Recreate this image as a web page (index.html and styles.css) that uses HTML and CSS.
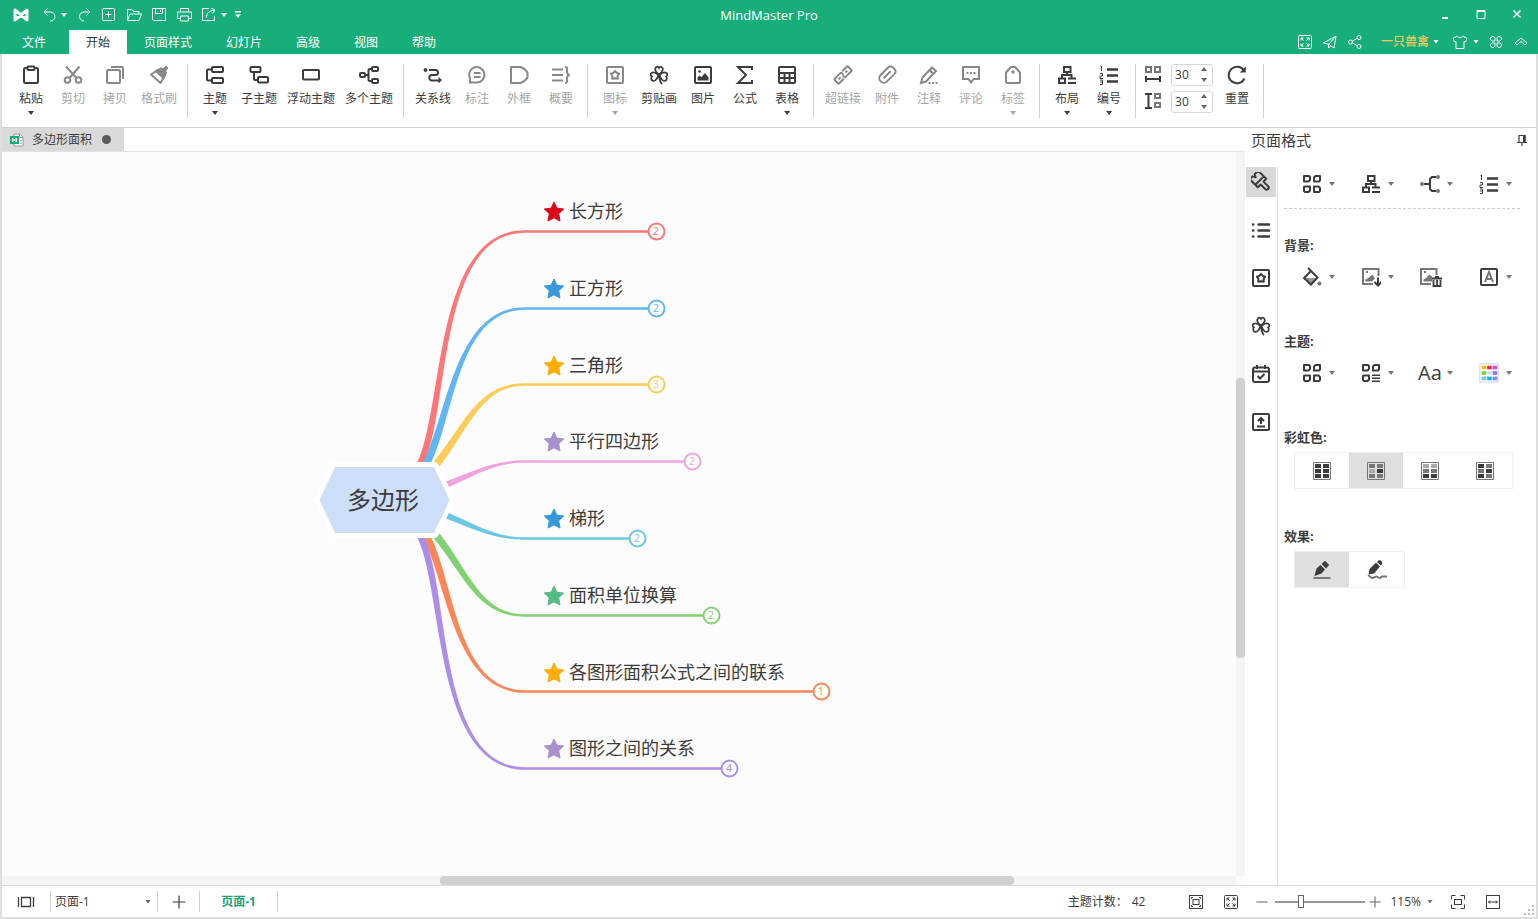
FILE: index.html
```html
<!DOCTYPE html>
<html lang="zh-CN">
<head>
<meta charset="utf-8">
<title>MindMaster Pro</title>
<link rel="stylesheet" href="styles.css">
</head>
<body>
<svg class="sprite" aria-hidden="true">
  <symbol id="logo" viewBox="0 0 16 14"><path d="M2 12V2l12 10V2L2 12" fill="none" stroke="currentColor" stroke-width="3" stroke-linejoin="round" stroke-linecap="round"/></symbol>
  <symbol id="undo" viewBox="0 0 17 17"><path d="M6.500 1.500L3 5l3.500 3.500M3 5h6.500a4.500 4.500 0 0 1 0 9H9"/></symbol>
  <symbol id="redo" viewBox="0 0 17 17"><path d="M10.500 1.500L14 5l-3.500 3.500M14 5H8a4.500 4.500 0 0 0 0 9"/></symbol>
  <symbol id="new" viewBox="0 0 17 17"><rect x="1.500" y="1.500" width="12" height="12" rx="1"/><path d="M7.500 4.500v6M4.500 7.500h6"/></symbol>
  <symbol id="open" viewBox="0 0 17 17"><path d="M1.500 13.500V2.500h4.500l1.500 2h5.500v2.500M1.500 13.500l2.500-6.500h11.500l-2.500 6.500z"/></symbol>
  <symbol id="save" viewBox="0 0 17 17"><path d="M1.500 1.500h13v12h-12l-1-1zM4.500 1.500v5h7v-5M9.500 3v2"/></symbol>
  <symbol id="print" viewBox="0 0 17 17"><path d="M4.500 5V1.500h8V5M4.500 11.500h-3V5h14v6.500h-3M4.500 9h8v5h-8z"/></symbol>
  <symbol id="export" viewBox="0 0 17 17"><path d="M8 1.500H1.500v12h12V9M5.500 10.500c0-4 2-6.500 8-7.500M10.500 1.500L14 3l-2.500 3.500"/></symbol>
  <symbol id="more" viewBox="0 0 8 8"><path d="M1 .8h6" stroke-width="1.500"/><path d="M1 3.500h6L4 7z" fill="currentColor" stroke="none"/></symbol>
  <symbol id="full" viewBox="0 0 16 16"><rect x="1.500" y="1.500" width="13" height="13" rx="1"/><path d="M4 6.500V4h2.500M4 4l2.500 2.500M9.500 4H12v2.500M12 4L9.500 6.500M4 9.500V12h2.500M4 12l2.500-2.500M12 9.500V12H9.500M12 12L9.500 9.500"/></symbol>
  <symbol id="plane" viewBox="0 0 16 16"><path d="M1.500 9L14 2l-2 12-5-3.500zM6.500 10.500L14 2M6.500 10.500V14l2-2"/></symbol>
  <symbol id="share" viewBox="0 0 16 16"><circle cx="3.500" cy="8" r="2"/><circle cx="12" cy="3.500" r="2"/><circle cx="12" cy="12.500" r="2"/><path d="M5.500 7L10 4.500M5.500 9l4.500 2.500"/></symbol>
  <symbol id="shirt" viewBox="0 0 16 16"><path d="M5 2L1 4.500l1.500 3.500 1.500-.5v7h8v-7l1.500.5L15 4.500 11 2c-1 2-5 2-6 0z"/></symbol>
  <symbol id="apps" viewBox="0 0 16 16"><path d="M7 7H4.200A2.300 2.300 0 1 1 7 4.200zM9 7h2.800A2.300 2.300 0 1 0 9 4.200zM7 9H4.200A2.300 2.300 0 1 0 7 11.800zM9 9h2.800A2.300 2.300 0 1 1 9 11.800z"/></symbol>
  <symbol id="chev" viewBox="0 0 16 16"><path d="M2 9l6-5 6 5-2 2-4-3.500L4 11z"/></symbol>
  <symbol id="paste" viewBox="0 0 20 20"><rect x="3" y="3" width="14" height="15" rx="1.500"/><rect x="6.500" y="1.500" width="7" height="3.500" rx="1" fill="#fff"/></symbol>
  <symbol id="cut" viewBox="0 0 20 20"><circle cx="4.500" cy="15" r="2.800"/><circle cx="15.500" cy="15" r="2.800"/><path d="M6.500 13L16.500 1.500M13.500 13L3 1.500"/></symbol>
  <symbol id="copy" viewBox="0 0 20 20"><rect x="2" y="5" width="13" height="13" rx="1"/><path d="M6 2h11a1 1 0 0 1 1 1v11"/></symbol>
  <symbol id="brush" viewBox="0 0 20 20"><path d="M2 9.500l7-4.500 6.500 6L11.500 18z" stroke-linejoin="round"/><path d="M7 6l3-1.500L16 10l-1.500 3z" fill="currentColor"/><path d="M9.500 5.500l2-3 2.500 1.500L17 .8 19 3l-2.500 3 1.200 2-2.200 3z" fill="currentColor" stroke-width="1"/></symbol>
  <symbol id="topic" viewBox="0 0 20 20"><rect x="7" y="2" width="11" height="5" rx="1"/><rect x="7" y="13" width="11" height="5" rx="1"/><path d="M7 4.500H3a1 1 0 0 0-1 1v9a1 1 0 0 0 1 1h4"/></symbol>
  <symbol id="subtopic" viewBox="0 0 20 20"><rect x="1.500" y="2" width="10" height="5" rx="1"/><rect x="9" y="12" width="10" height="5.500" rx="1"/><path d="M5 7v7a1 1 0 0 0 1 1h3"/></symbol>
  <symbol id="float" viewBox="0 0 20 20"><rect x="2" y="5" width="16" height="9.500" rx="1"/></symbol>
  <symbol id="multi" viewBox="0 0 20 20"><rect x="1" y="8" width="5" height="4" rx="1"/><rect x="13" y="2" width="6" height="4" rx="1"/><rect x="13" y="14" width="6" height="4" rx="1"/><path d="M6 10h3.500M13 4h-2.500a1 1 0 0 0-1 1v10a1 1 0 0 0 1 1H13"/></symbol>
  <symbol id="relation" viewBox="0 0 20 20"><circle cx="2.500" cy="5" r="1.500" fill="currentColor" stroke-width="1"/><path d="M6 5h6.500a2.500 2.500 0 0 1 0 5H9a2.500 2.500 0 0 0 0 5.500h7"/><path d="M15.500 12v6.500L19 15z" fill="currentColor" stroke-width="0"/></symbol>
  <symbol id="callout" viewBox="0 0 20 20"><path d="M3 17.500V13.500A7.700 7.700 0 1 1 10 17.500zM7 8h6.500M7 12h6.500"/></symbol>
  <symbol id="boundary" viewBox="0 0 20 20"><path d="M2 2h9.500c3 1 5.500 3 7 5.500v5c-1.500 2.500-4 4.500-7 5.500H2z" stroke-linejoin="round"/></symbol>
  <symbol id="summary" viewBox="0 0 20 20"><path d="M1 4.500h11M1 10h11M1 15.500h11M14 2c3 0 2 2 2 4.500 0 2 .5 3 2.500 3.500-2 .5-2.500 1.500-2.500 3.500 0 2.500 1 4.500-2 4.500"/></symbol>
  <symbol id="mark" viewBox="0 0 20 20"><rect x="2" y="2" width="16" height="16" rx="1"/><path d="M10 5.800l1.500 1.900 2.600.9-1.400 2.200v2.900L10 13.200l-2.700.5v-2.900L5.900 8.600l2.600-.9z" stroke-linejoin="round"/></symbol>
  <symbol id="clover" viewBox="0 0 20 20"><path d="M10 9.500C7.500 7.500 6 5.500 6.200 3.800 6.500 1.500 9 1 10 2.800c1-1.800 3.500-1.300 3.800 1C14 5.500 12.500 7.500 10 9.500zM9.500 10C7 7.700 4.500 6.700 2.800 7.800c-1.800 1.300-1.300 3 .1 3.700-1.300 1.500-.8 4.200 1.600 4.400C6.800 16 8.300 13.500 9.500 10zM10.500 10c2.500-2.300 5-3.300 6.700-2.200 1.800 1.300 1.300 3-.1 3.700 1.300 1.500.8 4.200-1.600 4.400-2.300.1-3.800-2.400-5-5.900zM10 9.500c.2 4.500.8 7.500 3 9.500" stroke-width="1.800"/></symbol>
  <symbol id="picture" viewBox="0 0 20 20"><rect x="2" y="2" width="16" height="16" rx="1"/><path d="M4.500 15.500v-3l2-2 2 1.500 3.500-4 3.500 4.500v3z" fill="currentColor" stroke="none"/><circle cx="6.500" cy="6.500" r="1.300" fill="currentColor" stroke="none"/></symbol>
  <symbol id="sigma" viewBox="0 0 20 20"><path d="M17 5V2H3l8 8-8 8h14v-3"/></symbol>
  <symbol id="table" viewBox="0 0 20 20"><rect x="2" y="2" width="16" height="16" rx="1"/><path d="M2 8h16M2 13h16M7.500 8v10M12.500 8v10"/></symbol>
  <symbol id="link" viewBox="0 0 20 20"><g transform="rotate(-45 10 10)"><path d="M8 13.200H1.500a1 1 0 0 1-1-1V7.800a1 1 0 0 1 1-1h8a1 1 0 0 1 1 1V10M12 6.800h6.500a1 1 0 0 1 1 1v4.400a1 1 0 0 1-1 1h-8a1 1 0 0 1-1-1V10M4 10h2.500M13.500 10H16"/></g></symbol>
  <symbol id="clip" viewBox="0 0 20 20"><g transform="rotate(45 10 10)"><path d="M14.500 6v8.500a4.500 4.500 0 0 1-9 0V4a3.200 3.200 0 0 1 3.200-3.500h2.600a3.200 3.200 0 0 1 3.200 3.500M10 5.500v8.500" stroke-linecap="round"/></g></symbol>
  <symbol id="note" viewBox="0 0 20 20"><path d="M2 18l1.500-5.500L13 2.500l4 3.500L7 16.500zM10.500 5l4 4"/><path d="M9.500 18h2M13 18h2M16.500 18h2"/></symbol>
  <symbol id="comment" viewBox="0 0 20 20"><path d="M2 2h16v12h-5.500L10 17.500 7.500 14H2z"/><path d="M5.500 8h2M9 8h2M12.500 8h2"/></symbol>
  <symbol id="tag" viewBox="0 0 20 20"><path d="M4 18a1 1 0 0 1-1-1V7.500L8 2h4l5 5.500V17a1 1 0 0 1-1 1z" stroke-linejoin="round"/><circle cx="10" cy="7" r="1.700" fill="currentColor" stroke="none"/></symbol>
  <symbol id="layout" viewBox="0 0 20 20"><rect x="7" y="2" width="6.500" height="5"/><rect x="2" y="13.500" width="6" height="4.500"/><path d="M10 7v3M5 13v-3h9.500v3M11 13.500h8M11 18h8"/></symbol>
  <symbol id="number" viewBox="0 0 20 20"><path d="M8 4.500h11M8 10.500h11M8 16.500h11" stroke-width="2.400"/><path d="M1.500 2l1-1v5M1 8.500h2.500V11H1v2.500h3M1 15h2.500v4.500H1M1 17h2.500" stroke-width="1"/></symbol>
  <symbol id="hgap" viewBox="0 0 18 18"><g stroke="#777"><rect x="2" y="1" width="5" height="5"/><rect x="11" y="1" width="5" height="5"/></g><path d="M2 10v6M16 10v6M2 13h14"/></symbol>
  <symbol id="vgap" viewBox="0 0 18 18"><g stroke="#777"><rect x="11" y="1" width="5" height="4"/><rect x="11" y="10" width="5" height="4"/></g><path d="M1 1h7M1 15h7M4.500 1v14"/></symbol>
  <symbol id="reset" viewBox="0 0 20 20"><path d="M17.500 13.500A8.300 8.300 0 1 1 17 5.500"/><path d="M18.800 1.500v6h-6z" fill="currentColor" stroke="none"/></symbol>
  <symbol id="pin" viewBox="0 0 12 12"><path d="M3 8V1.500h6V8M1 8.500h10M6 9v3" stroke-width="1.200"/><path d="M7 1h2.500v7H7z" fill="currentColor" stroke="none"/></symbol>
  <symbol id="format" viewBox="0 0 20 20"><g transform="rotate(-45 10 10)" stroke-linejoin="round"><path d="M4 8V0h4l1.500 3L11 0h5v8zM4 8v3.500h4V18a2 2 0 0 0 4 0v-6.500h4V8"/></g></symbol>
  <symbol id="list" viewBox="0 0 20 20"><path d="M7.500 4.500h10.500M7.500 10.500h10.500M7.500 16.500h10.500M2 4.500h.3M2 10.500h.3M2 16.500h.3" stroke-width="2.500" stroke-linecap="round"/></symbol>
  <symbol id="task" viewBox="0 0 20 20"><rect x="2" y="3.500" width="16" height="14.500" rx="2"/><path d="M2 7.500h16M6 1v4M14 1v4M6.500 12l2.500 2.500 4.500-4.500"/></symbol>
  <symbol id="upload" viewBox="0 0 20 20"><rect x="2" y="2" width="16" height="16" rx="1"/><path d="M6 14.500h8M10 12V6.500M7 9l3-3 3 3"/></symbol>
  <symbol id="four" viewBox="0 0 20 20"><path d="M2 2v5.500h4.500L8 6V3L7 2zM12 3.500V7.500h5l1-1V2h-4.500zM2 13v4l1 1h3.500L8 16.500V12.500H3zM12 12.500V18h5l1-1v-3l-1.500-1.500z" stroke-linejoin="round"/></symbol>
  <symbol id="fourlist" viewBox="0 0 20 20"><path d="M2 2v5.500h4.500L8 6V3L7 2zM12 3.500V7.500h5l1-1V2h-4.500zM2 13v4l1 1h3.500L8 16.500V12.500H3z" stroke-linejoin="round"/><path d="M11 12.200h8M11 15.200h8M11 18.200h8" stroke-width="1.600"/></symbol>
  <symbol id="branch" viewBox="0 0 20 20"><path d="M4 10h5M16 3h-4l-2 2v10l2 2h4"/><g fill="#777" stroke="none"><circle cx="2" cy="10" r="2"/><circle cx="18" cy="3" r="2"/><circle cx="18" cy="17" r="2"/></g></symbol>
  <symbol id="fill" viewBox="0 0 20 20"><path d="M3 11h12l-6 6z" fill="#999" stroke="none"/><path d="M6 1l9.500 9.500L9 17.500 2 11l6.500-6.500"/><circle cx="17.500" cy="16.500" r="2" fill="#777" stroke="none"/></symbol>
  <symbol id="imgdown" viewBox="0 0 20 20"><g stroke="#777"><path d="M12 17H2V2h15.500v7"/><path d="M4.500 14.500v-2l2-1 5-4 2.500 4-3 3z" fill="#777" stroke="none"/><path d="M5 5h2"/></g><path d="M17 10.500v8M13.500 15l3.500 3.500 3.500-3.500"/></symbol>
  <symbol id="imgdel" viewBox="0 0 22 20"><g stroke="#777"><path d="M11 17H1V2h15.500v6"/><path d="M3.500 14.500v-2l2-1 4-4 2.500 2v5z" fill="#777" stroke="none"/><path d="M4 5h2"/></g><path d="M12 11.500h10M15 10h4M13.500 13v6h7v-6M17 13v5" stroke-width="1.800"/></symbol>
  <symbol id="boxa" viewBox="0 0 20 20"><rect x="2" y="2" width="16" height="16" rx="1"/><path d="M6 15l4-10 4 10M7.500 12h5" stroke="#777"/></symbol>
  <symbol id="palette" viewBox="0 0 22 22"><rect x="1" y="1" width="20" height="20" fill="#fff" stroke="#ccd" stroke-width="1"/><g stroke="none"><path d="M3 3h5v4H3z" fill="#f0c000"/><path d="M9 3h5v4H9z" fill="#e82850"/><path d="M15 3h5v4h-5z" fill="#c850d0"/><path d="M3 9h5v4H3z" fill="#78cc48"/><path d="M9 9h5v4H9z" fill="#ddd"/><path d="M15 9h5v4h-5z" fill="#9070e8"/><path d="M3 15h5v4H3z" fill="#68c8e0"/><path d="M9 15h5v4H9z" fill="#00b8f8"/><path d="M15 15h5v4h-5z" fill="#7888ff"/></g></symbol>
  <symbol id="pen" viewBox="0 0 20 20"><path d="M1.500 18h17" stroke="#777"/><path d="M2.500 16L4.500 8.500l4-3.500L13 9.500l-3.500 4z" fill="currentColor" stroke="none"/><path d="M9.500 4L13 .8l4.200 4.200L14 8.500z" fill="currentColor" stroke="none"/></symbol>
  <symbol id="pencil" viewBox="0 0 20 20"><path d="M1 16c2-1.500 2 2 4.500 2s2.500-2.500 5-1 3 1 4.500-.5h5" stroke="#777"/><path d="M1.500 14.500l1-5.500L9 2.500 13 6.500 7 13.500z" fill="currentColor" stroke="none"/><path d="M10 2l1.500-1.500c1.800-.8 4.500 1.500 3.500 3.500L13.800 5.500z" fill="currentColor" stroke="none"/></symbol>
  <symbol id="pages" viewBox="0 0 18 16"><path d="M1.500 3v10M16.500 3v10M4.500 3.500h9v9h-9z" stroke-width="1.300"/></symbol>
  <symbol id="plus" viewBox="0 0 14 14"><path d="M7 .5v13M.5 7h13" stroke-width="1.200"/></symbol>
  <symbol id="minus" viewBox="0 0 14 14"><path d="M.5 7h13" stroke-width="1.200"/></symbol>
  <symbol id="fitpage" viewBox="0 0 16 16"><rect x="1.500" y="1.500" width="13" height="13"/><rect x="5" y="5.500" width="6" height="5"/><path d="M3.500 5V3.500H5M11 3.500h1.500V5M3.500 11v1.500H5M11 12.500h1.500V11"/></symbol>
  <symbol id="focus" viewBox="0 0 16 16"><path d="M1.500 5.500v-4h4M10.500 1.500h4v4M1.500 10.500v4h4M14.500 10.500v4h-4"/><rect x="4.500" y="5.500" width="7" height="5"/></symbol>
  <symbol id="fitwidth" viewBox="0 0 16 16"><rect x="1.500" y="1.500" width="13" height="13"/><path d="M3.500 8h9M5 6.500L3.500 8 5 9.500M11 6.500L12.500 8 11 9.500"/></symbol>
  <symbol id="star" viewBox="-11 -11 22 22"><path d="M0-10L2.900-3.800 9.700-3 4.700 1.700 6 9 0 5.800-6 9-4.700 1.700-9.700-3-2.900-3.800z" fill="currentColor" stroke="currentColor" stroke-linejoin="round" stroke-width="1"/></symbol>
</svg>

<header class="topbar">
  <div class="titlebar">
    <div class="quick">
      <svg class="logo"><use href="#logo"/></svg>
      <button class="ic17" aria-label="撤销"><svg><use href="#undo"/></svg></button><i class="caret undo-caret"></i>
      <div class="quick-list">
        <button class="ic17" aria-label="重做"><svg><use href="#redo"/></svg></button>
        <button class="ic17" aria-label="新建"><svg><use href="#new"/></svg></button>
        <button class="ic17" aria-label="打开"><svg><use href="#open"/></svg></button>
        <button class="ic17" aria-label="保存"><svg><use href="#save"/></svg></button>
        <button class="ic17" aria-label="打印"><svg><use href="#print"/></svg></button>
        <button class="ic17" aria-label="导出"><svg><use href="#export"/></svg></button>
      </div>
      <i class="caret export-caret"></i>
      <button class="ic8" aria-label="更多"><svg><use href="#more"/></svg></button>
    </div>
    <h1 class="app-title">MindMaster Pro</h1>
    <div class="window-buttons">
      <button aria-label="最小化"><svg viewBox="0 0 12 12"><path d="M3 9h6" stroke-width="2"/></svg></button>
      <button aria-label="最大化"><svg viewBox="0 0 12 12"><path d="M2 2.500h8v7H2zM1.500 1.500h9"/></svg></button>
      <button aria-label="关闭"><svg viewBox="0 0 12 12"><path d="M2.500 1.500l7 7M9.500 1.500l-7 7" stroke-width="1.500"/></svg></button>
    </div>
  </div>
  <div class="menubar">
    <nav class="menu">
      <button class="file-menu">文件</button>
      <button class="active">开始</button>
      <button>页面样式</button>
      <button>幻灯片</button>
      <button>高级</button>
      <button>视图</button>
      <button>帮助</button>
    </nav>
    <div class="account">
      <button aria-label="全屏"><svg><use href="#full"/></svg></button>
      <button aria-label="发送"><svg><use href="#plane"/></svg></button>
      <button aria-label="分享"><svg><use href="#share"/></svg></button>
      <button class="user">一只兽禽<i class="caret"></i></button>
      <button class="skin" aria-label="皮肤"><svg><use href="#shirt"/></svg><i class="caret"></i></button>
      <button aria-label="应用"><svg><use href="#apps"/></svg></button>
      <button aria-label="收起"><svg><use href="#chev"/></svg></button>
    </div>
  </div>
</header>

<div class="frame">
<section class="ribbon" aria-label="开始">
  <div class="group first">
    <button class="tool"><svg><use href="#paste"/></svg>粘贴<i class="caret"></i></button>
    <button class="tool off"><svg><use href="#cut"/></svg>剪切</button>
    <button class="tool off"><svg><use href="#copy"/></svg>拷贝</button>
    <button class="tool off"><svg><use href="#brush"/></svg>格式刷</button>
  </div>
  <div class="group">
    <button class="tool"><svg><use href="#topic"/></svg>主题<i class="caret"></i></button>
    <button class="tool"><svg><use href="#subtopic"/></svg>子主题</button>
    <button class="tool"><svg><use href="#float"/></svg>浮动主题</button>
    <button class="tool"><svg><use href="#multi"/></svg>多个主题</button>
  </div>
  <div class="group">
    <button class="tool"><svg><use href="#relation"/></svg>关系线</button>
    <button class="tool off"><svg><use href="#callout"/></svg>标注</button>
    <button class="tool off"><svg><use href="#boundary"/></svg>外框</button>
    <button class="tool off"><svg><use href="#summary"/></svg>概要</button>
  </div>
  <div class="group">
    <button class="tool off"><svg><use href="#mark"/></svg>图标<i class="caret"></i></button>
    <button class="tool"><svg><use href="#clover"/></svg>剪贴画</button>
    <button class="tool"><svg><use href="#picture"/></svg>图片</button>
    <button class="tool"><svg><use href="#sigma"/></svg>公式</button>
    <button class="tool"><svg><use href="#table"/></svg>表格<i class="caret"></i></button>
  </div>
  <div class="group">
    <button class="tool off"><svg><use href="#link"/></svg>超链接</button>
    <button class="tool off"><svg><use href="#clip"/></svg>附件</button>
    <button class="tool off"><svg><use href="#note"/></svg>注释</button>
    <button class="tool off"><svg><use href="#comment"/></svg>评论</button>
    <button class="tool off"><svg><use href="#tag"/></svg>标签<i class="caret"></i></button>
  </div>
  <div class="group">
    <button class="tool"><svg><use href="#layout"/></svg>布局<i class="caret"></i></button>
    <button class="tool"><svg><use href="#number"/></svg>编号<i class="caret"></i></button>
  </div>
  <div class="group spacing">
    <div class="spins">
      <div class="spin-row">
        <label for="hgap-in" aria-label="水平间距"><svg><use href="#hgap"/></svg></label>
        <div class="spin"><input id="hgap-in" type="number" value="30"><span class="steps"><button aria-label="增加"><i class="caret up"></i></button><button aria-label="减少"><i class="caret"></i></button></span></div>
      </div>
      <div class="spin-row">
        <label for="vgap-in" aria-label="垂直间距"><svg><use href="#vgap"/></svg></label>
        <div class="spin"><input id="vgap-in" type="number" value="30"><span class="steps"><button aria-label="增加"><i class="caret up"></i></button><button aria-label="减少"><i class="caret"></i></button></span></div>
      </div>
    </div>
    <button class="tool"><svg><use href="#reset"/></svg>重置</button>
  </div>
</section>

<main class="workspace">
  <section class="editor">
    <div class="doc-tabs">
      <button class="doc-tab">
        <svg viewBox="0 0 14 14"><path d="M4 1h6l3 3v9H4z" fill="#fff" stroke="#999"/><path d="M9.500 1v3.500H13M10 7.500h2M10 10h2" stroke="#999"/><path d="M0 3h9v8H0z" fill="#17ae79" stroke="none"/><path d="M2.500 9V5l4 4V5z" stroke="#fff" stroke-width="1"/></svg>
        <span>多边形面积</span><i class="dot"></i>
      </button>
    </div>
    <div class="stage">
      <div class="canvas">
        <svg class="map" viewBox="2 152 1234 724" width="1234" height="724">
          <g stroke="none">
            <path fill="#ff7676" d="M409 480L417 463C444 410 433 230.300 525 230.300H648V232.700H525C437 232.700 450 410 424 463L416 480z"/>
            <path fill="#5fb6f2" d="M415 480L423 463C448 413 455 307.300 525 307.300H648V309.700H525C458 309.700 455 413 431 463L422 480z"/>
            <path fill="#ffcc57" d="M421 478L435 460C466 422 478 383.300 525 383.300H648V385.700H525C482 385.700 471 425 440 466L428 482z"/>
            <path fill="#efa4dd" d="M430 488L447 481C474 471 494 460.300 525 460.300H684V462.700H525C495 462.700 476 475 449 487L432 494z"/>
            <path fill="#6bc8e5" d="M430 512L447 519C474 529 494 539.700 525 539.700H629V537.300H525C495 537.300 476 525 449 513L432 506z"/>
            <path fill="#80d272" d="M421 522L435 540C466 578 478 616.700 525 616.700H703V614.300H525C482 614.300 471 575 440 534L428 518z"/>
            <path fill="#fd8659" d="M415 520L423 537C448 587 455 692.700 525 692.700H813V690.300H525C458 690.300 455 587 431 537L422 520z"/>
            <path fill="#ac8de8" d="M409 520L417 537C444 590 433 769.700 525 769.700H721V767.300H525C437 767.300 450 590 424 537L416 520z"/>
          </g>
          <path d="M335 467H434L449.500 500 434 533H335L319.500 500z" fill="#fff" stroke="#fff" stroke-width="10" stroke-linejoin="round"/>
          <path d="M335 467H434L449.500 500 434 533H335L319.500 500z" fill="#cddef8" stroke="none"/>
          <text class="root-text" x="383" y="509">多边形</text>

          <g color="#d9091b"><use href="#star" x="543" y="201" width="22" height="22"/></g>
          <g color="#3498db"><use href="#star" x="543" y="278" width="22" height="22"/><use href="#star" x="543" y="508" width="22" height="22"/></g>
          <g color="#ffae00"><use href="#star" x="543" y="355" width="22" height="22"/><use href="#star" x="543" y="662" width="22" height="22"/></g>
          <g color="#a990ce"><use href="#star" x="543" y="431" width="22" height="22"/><use href="#star" x="543" y="738" width="22" height="22"/></g>
          <g color="#56bb82"><use href="#star" x="543" y="585" width="22" height="22"/></g>

          <g class="topic-text">
            <text x="569" y="218">长方形</text>
            <text x="569" y="295">正方形</text>
            <text x="569" y="372">三角形</text>
            <text x="569" y="448">平行四边形</text>
            <text x="569" y="525">梯形</text>
            <text x="569" y="602">面积单位换算</text>
            <text x="569" y="679">各图形面积公式之间的联系</text>
            <text x="569" y="755">图形之间的关系</text>
          </g>

          <g class="count" color="#ff7676"><circle cx="656.500" cy="231.500" r="8"/><text x="656" y="235">2</text></g>
          <g class="count" color="#5fb6f2"><circle cx="656.500" cy="308.500" r="8"/><text x="656" y="312">2</text></g>
          <g class="count" color="#ffcc57"><circle cx="656.500" cy="384.500" r="8"/><text x="656" y="388">3</text></g>
          <g class="count" color="#efa4dd"><circle cx="692.500" cy="461.500" r="8"/><text x="692" y="465">2</text></g>
          <g class="count" color="#6bc8e5"><circle cx="637.500" cy="538.500" r="8"/><text x="637" y="542">2</text></g>
          <g class="count" color="#80d272"><circle cx="711.500" cy="615.500" r="8"/><text x="711" y="619">2</text></g>
          <g class="count" color="#fd8659"><circle cx="821.500" cy="691.500" r="8"/><text x="821" y="695">1</text></g>
          <g class="count" color="#ac8de8"><circle cx="729.500" cy="768.500" r="8"/><text x="729" y="772">4</text></g>
        </svg>
      </div>
      <div class="track vertical"><div class="thumb"></div></div>
      <div class="track horizontal"><div class="thumb"></div></div>
    </div>
  </section>

  <aside class="panel">
    <div class="panel-head"><h2>页面格式</h2><button aria-label="固定"><svg><use href="#pin"/></svg></button></div>
    <div class="panel-body">
      <nav class="side">
        <button class="active" aria-label="页面格式"><svg><use href="#format"/></svg></button>
        <button aria-label="大纲"><svg><use href="#list"/></svg></button>
        <button aria-label="图标"><svg><use href="#mark"/></svg></button>
        <button aria-label="剪贴画"><svg><use href="#clover"/></svg></button>
        <button aria-label="任务"><svg><use href="#task"/></svg></button>
        <button aria-label="上传"><svg><use href="#upload"/></svg></button>
      </nav>
      <div class="options">
        <div class="row">
          <button aria-label="结构"><svg><use href="#four"/></svg><i class="caret"></i></button>
          <button aria-label="布局"><svg><use href="#layout"/></svg><i class="caret"></i></button>
          <button aria-label="连线"><svg><use href="#branch"/></svg><i class="caret"></i></button>
          <button aria-label="编号"><svg><use href="#number"/></svg><i class="caret"></i></button>
        </div>
        <hr>
        <h3>背景:</h3>
        <div class="row">
          <button aria-label="填充"><svg><use href="#fill"/></svg><i class="caret"></i></button>
          <button aria-label="背景图片"><svg><use href="#imgdown"/></svg><i class="caret"></i></button>
          <button aria-label="删除图片"><svg class="wide"><use href="#imgdel"/></svg></button>
          <button aria-label="水印"><svg><use href="#boxa"/></svg><i class="caret"></i></button>
        </div>
        <h3 class="next">主题:</h3>
        <div class="row">
          <button aria-label="主题"><svg><use href="#four"/></svg><i class="caret"></i></button>
          <button aria-label="主题颜色"><svg><use href="#fourlist"/></svg><i class="caret"></i></button>
          <button aria-label="主题字体"><span class="aa">Aa</span><i class="caret"></i></button>
          <button aria-label="调色板"><svg><use href="#palette"/></svg><i class="caret"></i></button>
        </div>
        <h3 class="next">彩虹色:</h3>
        <div class="segment">
          <button aria-label="单色"><svg viewBox="0 0 18 18"><path class="cell-box" d="M.5.500h17v17H.5z"/><g class="cells"><path d="M2 2h6v4H2zM10 2h6v4h-6zM2 7h6v4H2zM10 7h6v4h-6zM2 12h6v4H2zM10 12h6v4h-6z"/></g></svg></button>
          <button class="active" aria-label="彩虹色"><svg viewBox="0 0 18 18"><path class="cell-box" d="M.5.500h17v17H.5z"/><g class="cells"><path class="mid" d="M2 2h6v4H2zM10 2h6v4h-6zM2 12h6v4H2zM10 12h6v4h-6z"/><path class="light" d="M2 7h6v4H2z"/><path d="M10 7h6v4h-6z"/></g></svg></button>
          <button aria-label="渐变"><svg viewBox="0 0 18 18"><path class="cell-box" d="M.5.500h17v17H.5z"/><g class="cells"><path class="light" d="M2 2h6v4H2zM10 2h6v4h-6z"/><path class="mid" d="M2 7h6v4H2zM10 7h6v4h-6z"/><path d="M2 12h6v4H2zM10 12h6v4h-6z"/></g></svg></button>
          <button aria-label="交替"><svg viewBox="0 0 18 18"><path class="cell-box" d="M.5.500h17v17H.5z"/><g class="cells"><path d="M2 2h6v4H2zM10 7h6v4h-6zM2 12h6v4H2z"/><path class="mid" d="M10 2h6v4h-6zM2 7h6v4H2zM10 12h6v4h-6z"/></g></svg></button>
        </div>
        <h3 class="next">效果:</h3>
        <div class="segment effects">
          <button class="active" aria-label="普通"><svg><use href="#pen"/></svg></button>
          <button aria-label="手绘"><svg><use href="#pencil"/></svg></button>
        </div>
      </div>
    </div>
  </aside>
</main>

<footer class="status">
  <button class="pages" aria-label="页面列表"><svg><use href="#pages"/></svg></button>
  <div class="page-select"><select aria-label="页面"><option>页面-1</option></select><i class="caret"></i></div>
  <button class="add" aria-label="新建页面"><svg><use href="#plus"/></svg></button>
  <button class="page-tab">页面-1</button>
  <div class="status-right">
    <span class="total">主题计数：</span><span class="total-num">42</span>
    <button aria-label="适合页面"><svg><use href="#fitpage"/></svg></button>
    <button class="fullview" aria-label="全屏"><svg><use href="#full"/></svg></button>
    <button class="small" aria-label="缩小"><svg><use href="#minus"/></svg></button>
    <input type="range" aria-label="缩放" min="0" max="100" value="27">
    <button class="small" aria-label="放大"><svg><use href="#plus"/></svg></button>
    <button class="zoom">115%<i class="caret"></i></button>
    <button class="focus" aria-label="聚焦"><svg><use href="#focus"/></svg></button>
    <button aria-label="适合宽度"><svg><use href="#fitwidth"/></svg></button>
    <svg class="grip" viewBox="0 0 10 10"><path d="M8 0h2v2H8zM4 4h2v2H4zM8 4h2v2H8zM0 8h2v2H0zM4 8h2v2H4zM8 8h2v2H8z" fill="#bbb" stroke="none"/></svg>
  </div>
</footer>
</div>
</body>
</html>
```
FILE: styles.css
```css
* { box-sizing: border-box; }
html, body { height: 100%; }
body {
  margin: 0;
  display: flex;
  flex-direction: column;
  overflow: hidden;
  font: 12px/16px "Open Sans", "Noto Sans CJK SC", sans-serif;
  color: #3c3c3c;
  background: #fff;
}
button, input, select { font: inherit; color: inherit; }
button { border: 0; padding: 0; background: none; display: flex; align-items: center; justify-content: center; white-space: nowrap; }
svg { display: block; fill: none; stroke: currentColor; flex: none; }
h1, h2, h3 { margin: 0; font-weight: 400; }
.sprite { position: absolute; width: 0; height: 0; }
.caret {
  display: block;
  flex: none;
  width: 6px;
  height: 4px;
  background: currentColor;
  clip-path: polygon(0 0, 100% 0, 50% 100%);
}
.caret.up { transform: rotate(180deg); }

/* Title and menu */
.topbar { background: #17ae79; color: #fff; flex: none; }
.titlebar { height: 30px; display: grid; grid-template-columns: 1fr auto 1fr; align-items: center; }
.quick { display: flex; align-items: center; padding-left: 13px; }
.logo { width: 16px; height: 14px; margin-right: 12px; }
.ic17, .ic17 svg { width: 17px; height: 17px; }
.ic8, .ic8 svg { width: 8px; height: 8px; }
.undo-caret { margin: 0 9px 0 3px; }
.quick-list { display: flex; gap: 8px; }
.export-caret { margin: 0 7px 0 3px; }
.app-title { font-size: 13px; line-height: 16px; }
.window-buttons { display: flex; justify-content: flex-end; gap: 24px; padding-right: 15px; }
.window-buttons svg { width: 12px; height: 12px; }
.menubar { height: 24px; display: flex; justify-content: space-between; }
.menu { display: flex; padding-left: 5px; }
.menu button { padding: 2px 17px 0; height: 24px; }
.menu .file-menu { margin-right: 6px; }
.menu .active { background: #fff; color: #333; }
.account { display: flex; align-items: center; gap: 9px; padding: 0 9px 1px 0; }
.account svg { width: 16px; height: 16px; }
.account .user { color: #f7c95c; gap: 4px; margin: 0 4px 0 9px; font-weight: 500; }
.account .user .caret { color: #fff; }
.account .skin { gap: 5px; }

/* Window frame */
.frame {
  flex: 1;
  min-height: 0;
  display: flex;
  flex-direction: column;
  border: 2px solid #dedede;
  border-top: 0;
}

/* Ribbon */
.ribbon { display: flex; flex: none; padding: 10px 0 9px; border-bottom: 1px solid #d2d2d2; }
.group { display: flex; padding: 0 5px 0 6px; border-right: 1px solid #d0d0d0; height: 54px; }
.group.first { padding-left: 8px; }
.tool {
  flex-direction: column;
  justify-content: flex-start;
  min-width: 42px;
  padding: 1px 5px 0;
  line-height: 20px;
}
.tool svg { width: 20px; height: 20px; margin-bottom: 4px; stroke-width: 2; }
.tool .caret { margin-top: 2px; }
.off { color: #a6a6a6; }
.off svg { color: #888; }
.group.spacing { gap: 3px; padding-left: 8px; }
.spins { display: flex; flex-direction: column; gap: 5px; }
.spin-row { display: flex; align-items: center; gap: 9px; }
.spin-row svg { width: 18px; height: 18px; stroke-width: 2; }
.spin { display: flex; width: 42px; height: 22px; border: 1px solid #d6d6d6; border-radius: 3px; }
.spin input { width: 24px; border: 0; padding: 0 0 0 3px; background: none; outline: 0; appearance: textfield; }
.spin input::-webkit-inner-spin-button { display: none; }
.steps { display: flex; flex-direction: column; justify-content: space-between; padding: 2px 0 3px 5px; color: #666; }

/* Editor */
.workspace { flex: 1; min-height: 0; display: flex; }
.editor { flex: 1; min-width: 0; display: flex; flex-direction: column; }
.doc-tabs { flex: none; display: flex; height: 24px; border-bottom: 1px solid #e2e2e2; }
.doc-tab { background: #dadada; padding: 0 13px 0 8px; }
.doc-tab svg { width: 14px; height: 14px; margin-right: 8px; }
.dot { width: 9px; height: 9px; margin-left: 10px; border-radius: 50%; background: #5c5c5c; }
.stage { flex: 1; min-height: 0; display: grid; grid-template: 1fr 9px / 1fr 9px; background: #fcfcfc; }
.canvas { overflow: hidden; background: #fcfcfc; }
.track { display: grid; background: #f4f4f4; }
.thumb { background: #d0d0d0; border-radius: 4px; }
.vertical { grid-template-rows: 226fr 280fr 218fr; }
.vertical .thumb { grid-row: 2; }
.horizontal { grid-template-columns: 438fr 574fr 222fr; }
.horizontal .thumb { grid-column: 2; }
.map text { stroke: none; fill: #3c3c3c; }
.map .root-text { font-size: 24px; text-anchor: middle; }
.topic-text { font-size: 18px; }
.count circle { fill: #fff; stroke: currentColor; stroke-width: 2; }
.map .count text { fill: currentColor; font-size: 11px; text-anchor: middle; }

/* Format panel */
.panel { flex: none; width: 291px; display: flex; flex-direction: column; }
.panel-head { display: flex; justify-content: space-between; align-items: center; height: 24px; margin-bottom: 15px; padding: 0 8px 0 6px; }
.panel-head h2 { font-size: 15px; line-height: 20px; }
.panel-head svg { width: 12px; height: 12px; }
.panel-body { flex: 1; min-height: 0; display: flex; }
.side { flex: none; display: flex; flex-direction: column; gap: 18px; width: 33px; padding-left: 1px; border-right: 1px solid #dcdcdc; }
.side button { width: 30px; height: 30px; }
.side svg { width: 20px; height: 20px; stroke-width: 2; }
.side .active { background: #d8d8d8; }
.options { flex: 1; min-width: 0; padding: 0 16px 0 6px; }
.row { display: grid; grid-template-columns: repeat(4, 59px); padding-left: 18px; height: 34px; }
.row button { justify-content: flex-start; gap: 7px; }
.row svg { width: 20px; height: 20px; stroke-width: 2; }
.row .wide { width: 22px; }
.row .caret { color: #777; }
.aa { width: 24px; margin: 0 -2px; font-size: 20px; line-height: 24px; text-align: center; font-weight: 500; }
hr { margin: 7px 0 26px; border: 0; border-top: 1px dashed #ccc; }
h3 { font-size: 13px; line-height: 20px; font-weight: 700; margin-bottom: 5px; }
h3.next { margin-top: 37px; }
.segment { display: flex; width: max-content; margin-left: 10px; border: 1px solid #f0f0f0; height: 37px; }
.segment button { width: 54px; }
.segment button:last-child { width: 55px; }
.segment .active { background: #dfdfdf; }
.segment svg { width: 18px; height: 18px; stroke-width: 2; }
.effects svg { width: 20px; height: 20px; }
.segment .cell-box { stroke: #777; stroke-width: 1; }
.cells { fill: #3c3c3c; stroke: none; }
.cells .mid { fill: #777; }
.cells .light { fill: #aaa; }

/* Status bar */
.status { flex: none; display: flex; align-items: center; height: 32px; border-top: 1px solid #dcdcdc; }
.pages { width: 49px; height: 21px; border-right: 1px solid #d0d0d0; }
.pages svg { width: 18px; height: 16px; }
.page-select { display: grid; grid-template-columns: 1fr 12px; align-items: center; width: 107px; height: 21px; border-right: 1px solid #d0d0d0; }
.page-select select { grid-area: 1 / 1 / 2 / 3; appearance: none; border: 0; padding: 0 0 0 4px; background: none; outline: 0; }
.page-select .caret { grid-area: 1 / 2; color: #666; pointer-events: none; }
.add { width: 42px; height: 21px; border-right: 1px solid #d0d0d0; }
.add svg { width: 14px; height: 14px; }
.page-tab { width: 78px; height: 21px; border-right: 1px solid #d0d0d0; color: #17a374; font-weight: 700; }
.status-right { display: flex; align-items: center; margin-left: auto; align-self: stretch; padding-right: 2px; }
.status-right svg { width: 16px; height: 16px; }
.total { margin-right: 4px; }
.total-num { margin-right: 43px; }
.fullview { margin: 0 17px 0 19px; }
.status-right .small svg { width: 12px; height: 12px; }
.status-right .small { color: #666; }
.status-right input { width: 90px; height: 16px; margin: 0 4px 0 7px; appearance: none; background: linear-gradient(#999, #999) center / 100% 2px no-repeat; }
.status-right input::-webkit-slider-thumb { appearance: none; width: 6px; height: 13px; border: 1px solid #666; background: #fff; }
.zoom { gap: 6px; margin-left: 9px; }
.zoom .caret { color: #777; }
.focus { margin: 0 19px 0 17px; }
.status-right .grip { width: 10px; height: 10px; align-self: flex-end; margin: 0 0 2px 23px; }
```
